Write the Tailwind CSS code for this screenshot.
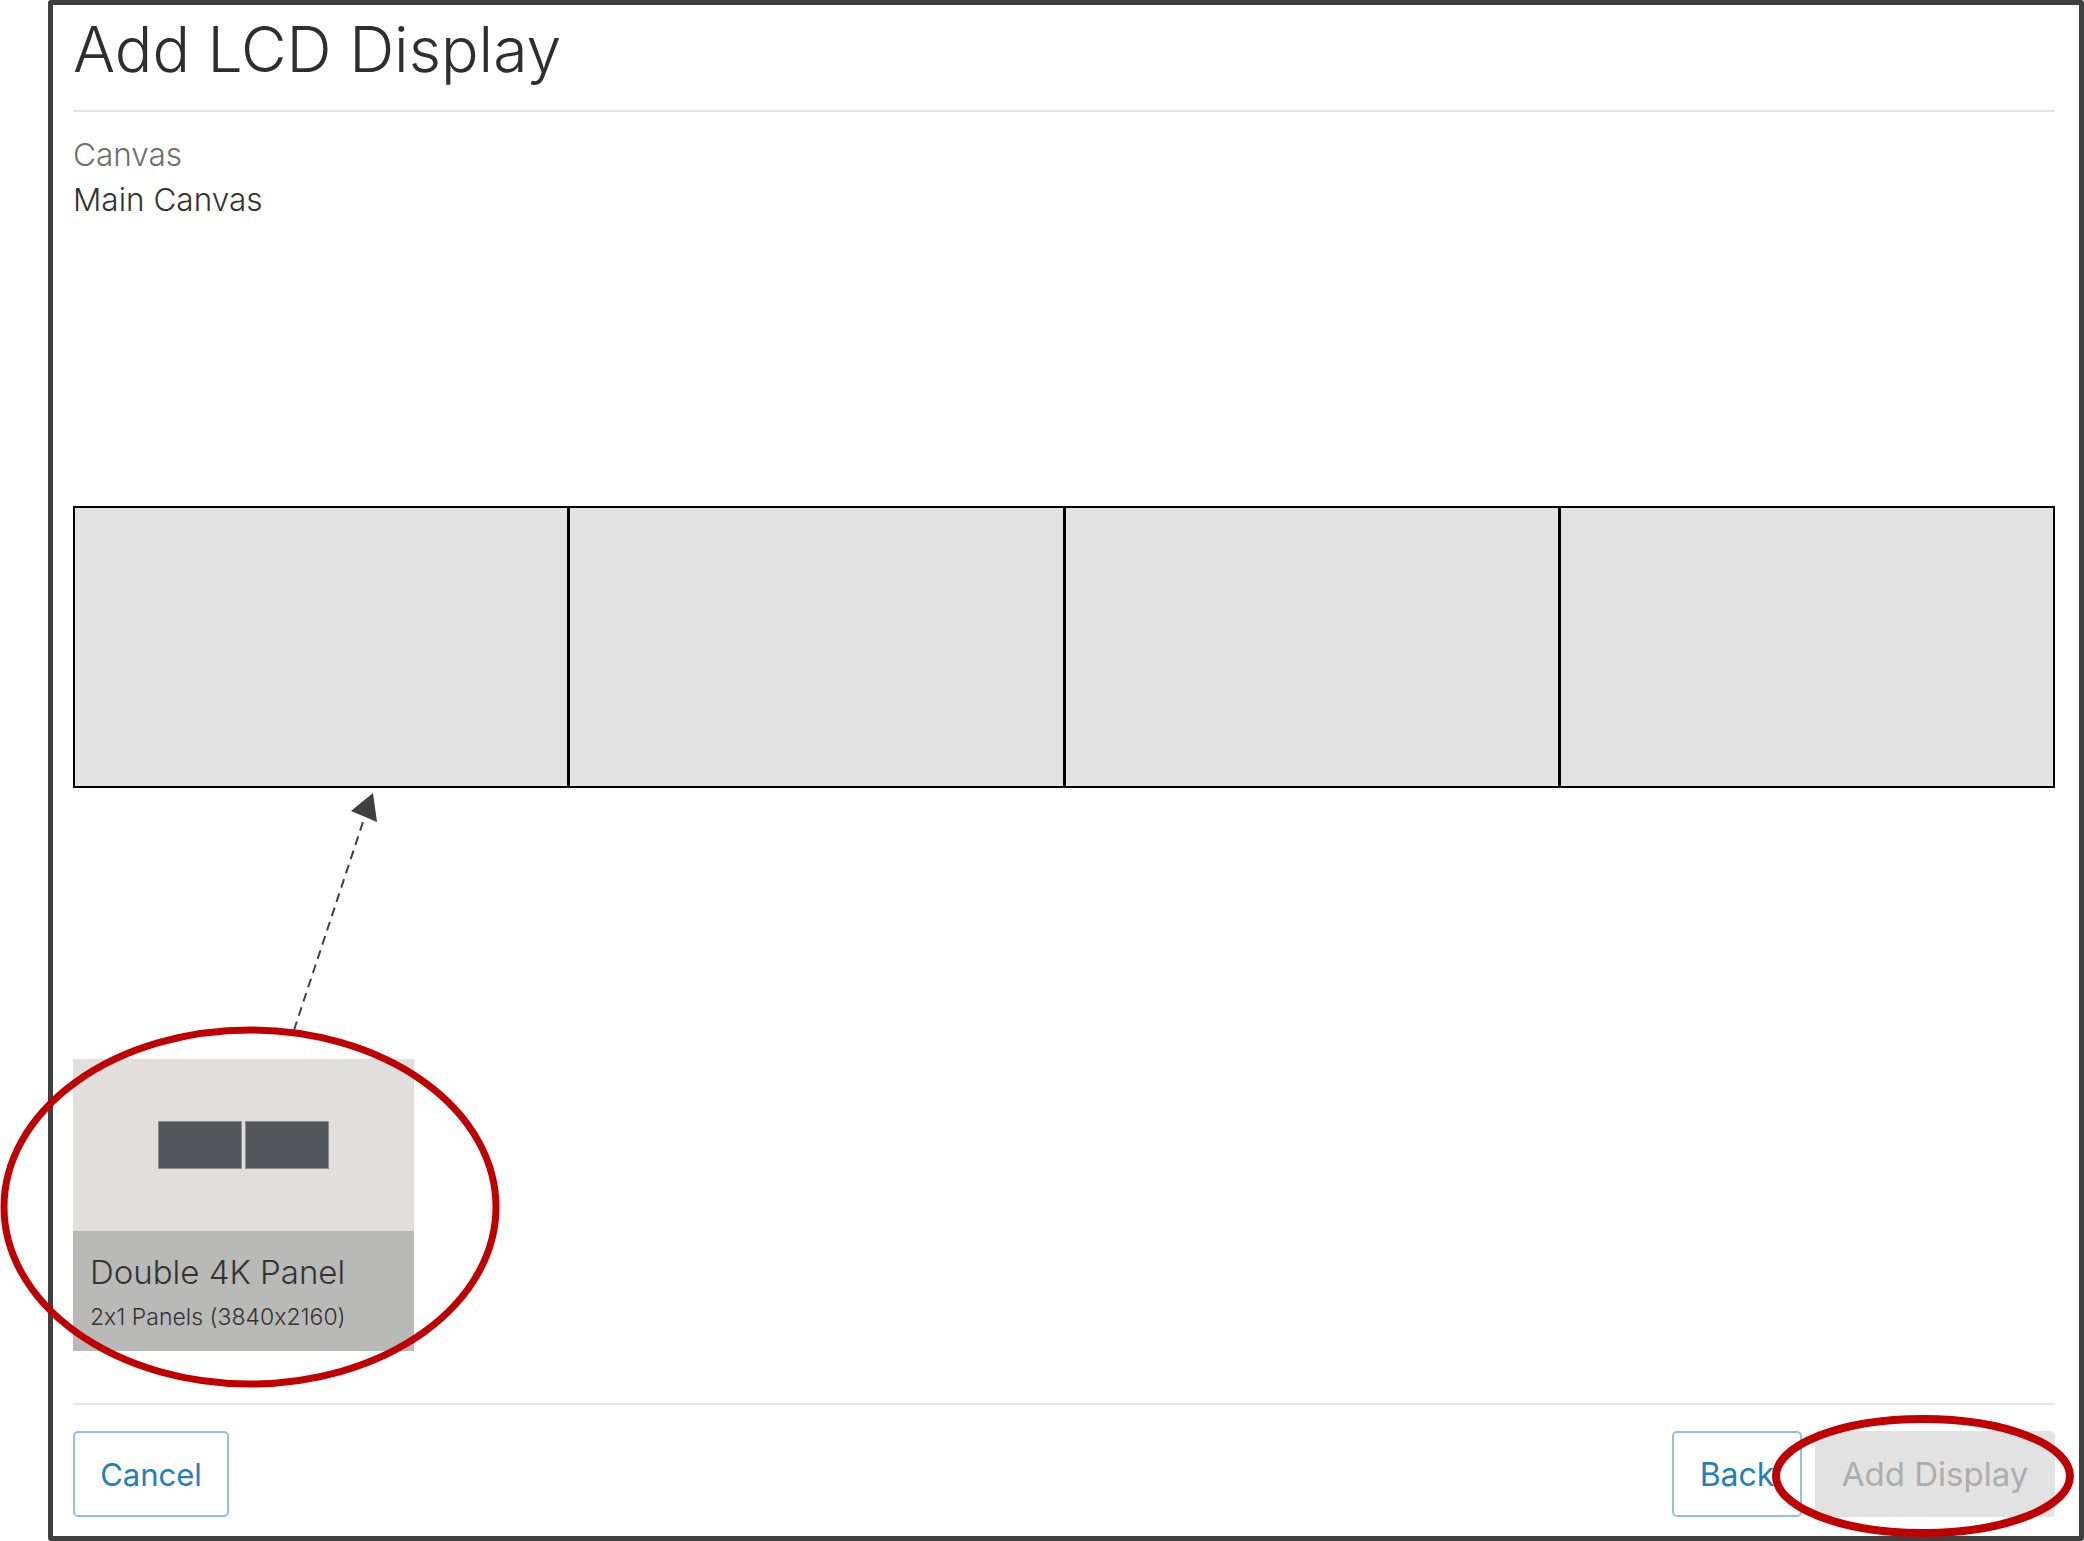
<!DOCTYPE html>
<html>
<head>
<meta charset="utf-8">
<script src="https://cdn.jsdelivr.net/npm/@tailwindcss/browser@4"></script>
</head>
<body class="bg-white">
<div class="relative w-[2084px] h-[1541px] overflow-hidden bg-white font-['Inter',sans-serif] [font-feature-settings:'calt'_0]">
  <div class="ml-[48px] h-[1541px] border-[5px] border-[#404040] rounded-[3px] pl-[20px] pr-[24px] flex flex-col">
    <h1 class="h-[107px] border-b-2 border-[#e6e6e6] pt-[8px] text-[62.5px] leading-[72px] font-light text-[#2e2e2e]">Add LCD Display</h1>
    <div class="pt-[20px] text-[31.5px] leading-[45px] font-light">
      <div class="text-[#6e6e6e]">Canvas</div>
      <div class="text-[#333333]">Main Canvas</div>
    </div>
    <div class="mt-[284px] h-[282px] grid grid-cols-4 gap-[3px] p-[2px] bg-black">
      <div class="bg-[#e3e3e3]"></div>
      <div class="bg-[#e3e3e3]"></div>
      <div class="bg-[#e3e3e3]"></div>
      <div class="bg-[#e3e3e3]"></div>
    </div>
    <div class="mt-[271px] w-[341px] h-[292px] flex flex-col">
      <div class="h-[172px] bg-[#e0dfdd] flex items-center justify-center gap-[3px]">
        <div class="w-[84px] h-[48px] bg-[#53565a] border border-[#8a8c8e]"></div>
        <div class="w-[84px] h-[48px] bg-[#53565a] border border-[#8a8c8e]"></div>
      </div>
      <div class="flex-1 bg-[#b9b9b7] px-[17px] pt-[21px] text-[#333333]">
        <div class="text-[33px] leading-[40px] font-light">Double 4K Panel</div>
        <div class="text-[23px] leading-[30px] mt-[10px] font-light">2x1 Panels (3840x2160)</div>
      </div>
    </div>
    <div class="mt-[52px] border-t-2 border-[#e6e6e6] pt-[26px] flex justify-between">
      <button class="w-[156px] h-[86px] rounded-[5px] border-2 border-[#92c0e0] bg-white pt-[2px] text-[31px] text-[#1f7fc0]">Cancel</button>
      <div class="flex gap-[13px]">
        <button class="w-[130px] h-[86px] rounded-[5px] border-2 border-[#92c0e0] bg-white pt-[2px] text-[32px] text-[#1f7fc0]">Back</button>
        <button class="w-[240px] h-[86px] rounded-[5px] bg-[#e2e2e2] pt-[2px] text-[33px] text-[#adadad]">Add Display</button>
      </div>
    </div>
  </div>
  <svg class="absolute left-0 top-0 pointer-events-none" width="2084" height="1541" viewBox="0 0 2084 1541" fill="none">
    <line x1="294" y1="1030" x2="363" y2="822" stroke="#404040" stroke-width="2" stroke-dasharray="9 6"/>
    <polygon points="373,793 351,811 377,822" fill="#404040"/>
    <ellipse cx="250" cy="1207" rx="246" ry="177" stroke="#c00000" stroke-width="7"/>
    <ellipse cx="1923" cy="1476" rx="147" ry="57" stroke="#c00000" stroke-width="8"/>
  </svg>
</div>
</body>
</html>
